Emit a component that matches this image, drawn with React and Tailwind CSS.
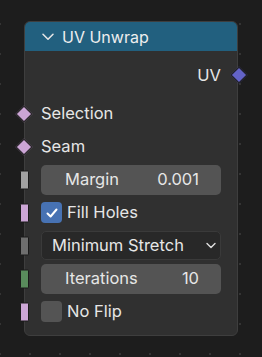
import React from 'react';

// Blender "UV Unwrap" geometry node

function Diamond({ color, side }) {
  return (
    <span
      className={`absolute top-1/2 w-[12px] h-[12px] -translate-y-1/2 rotate-45 border border-[#1a1a1a] ${
        side === 'right' ? 'right-[-7.5px]' : 'left-[-7.5px]'
      }`}
      style={{ backgroundColor: color }}
    />
  );
}

function Bar({ color }) {
  return (
    <span
      className="absolute left-[-5px] top-1/2 w-[9px] h-[19px] -translate-y-1/2 border border-[#1a1a1a] rounded-[1px]"
      style={{ backgroundColor: color }}
    />
  );
}

function Check({ on }) {
  return (
    <span
      className={`w-[21px] h-[21px] shrink-0 rounded-[4px] flex items-center justify-center ${
        on ? 'bg-[#4772b3]' : 'bg-[#545454]'
      }`}
    >
      {on && (
        <svg width="14" height="14" viewBox="0 0 14 14" fill="none">
          <path d="M2.5 7.5 L5.6 10.5 L11.5 3.5" stroke="#fff" strokeWidth="2" strokeLinecap="round" strokeLinejoin="round" />
        </svg>
      )}
    </span>
  );
}

function Field({ label, value }) {
  return (
    <div className="w-full h-[30px] rounded-[5px] bg-[#545454] flex items-center justify-between pl-[24px] pr-[22px]">
      <span>{label}</span>
      <span>{value}</span>
    </div>
  );
}

export default function App() {
  return (
    <div
      className="w-[262px] h-[357px] bg-[#1d1d1d] bg-[radial-gradient(circle,#343434_0.8px,transparent_1.3px)] bg-size-[30px_30px] bg-position-[-15px_9px] pt-[21px] pl-[24px] text-[16.5px] leading-none text-[#e6e6e6] font-['Inter','Noto_Sans',sans-serif]"
    >
      <div className="w-[214px] h-[315px] rounded-[6px] border border-[#3e3e3e] bg-[#303030] flex flex-col">
        {/* Header */}
        <div className="h-[29px] rounded-t-[5px] bg-[#22607f] flex items-center pl-[17px] gap-[8px] text-[16px] text-[#eeeeee]">
          <svg width="12" height="8" viewBox="0 0 12 8" fill="none">
            <path d="M1 1.2 L6 6.3 L11 1.2" stroke="#e6e6e6" strokeWidth="1.5" strokeLinecap="round" strokeLinejoin="round" />
          </svg>
          <span>UV Unwrap</span>
        </div>

        <div className="flex flex-col pt-[8px] px-[16px]">
          <div className="relative h-[32px] flex items-center justify-end mr-[-16px] pr-[16px]">
            <span>UV</span>
            <Diamond color="#6363c7" side="right" />
          </div>

          <div className="relative h-[33px] mt-[6px] flex items-center ml-[-16px] pl-[16px]">
            <Diamond color="#cca6d6" />
            <span>Selection</span>
          </div>
          <div className="relative h-[33px] flex items-center ml-[-16px] pl-[16px]">
            <Diamond color="#cca6d6" />
            <span>Seam</span>
          </div>

          <div className="relative h-[33px] flex items-center ml-[-16px] pl-[16px]">
            <Bar color="#a1a1a1" />
            <Field label="Margin" value="0.001" />
          </div>

          <div className="relative h-[33px] flex items-center ml-[-16px] pl-[16px] gap-[5px]">
            <Bar color="#cca6d6" />
            <Check on />
            <span>Fill Holes</span>
          </div>

          <div className="relative h-[33px] flex items-center ml-[-16px] pl-[16px]">
            <Bar color="#6e6e6e" />
            <div className="w-full h-[29px] rounded-[5px] bg-[#282828] border border-[#3a3a3a] flex items-center justify-between pl-[10px] pr-[4px]">
              <span>Minimum Stretch</span>
              <svg width="10" height="7" viewBox="0 0 10 7" fill="none">
                <path d="M1 1.5 L5 5.5 L9 1.5" stroke="#e0e0e0" strokeWidth="1.4" strokeLinecap="round" strokeLinejoin="round" />
              </svg>
            </div>
          </div>

          <div className="relative h-[33px] flex items-center ml-[-16px] pl-[16px]">
            <Bar color="#598c5c" />
            <Field label="Iterations" value="10" />
          </div>

          <div className="relative h-[33px] flex items-center ml-[-16px] pl-[16px] gap-[5px]">
            <Bar color="#cca6d6" />
            <Check />
            <span>No Flip</span>
          </div>
        </div>
      </div>
    </div>
  );
}
